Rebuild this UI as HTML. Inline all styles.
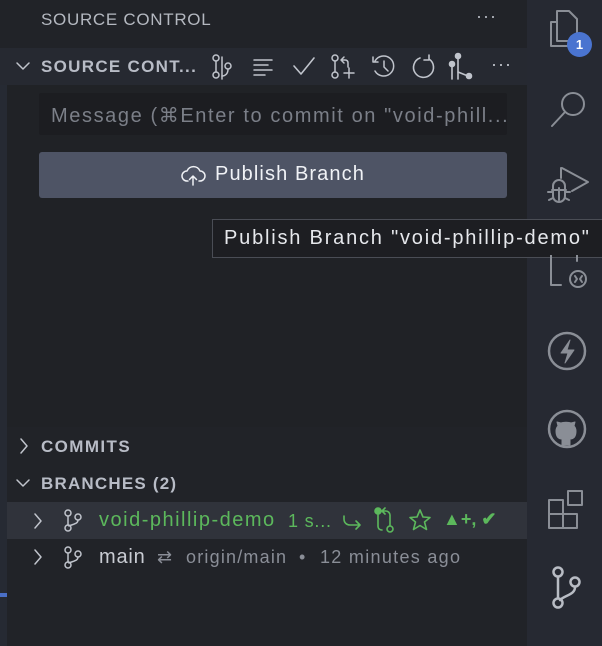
<!DOCTYPE html>
<html><head><style>
*{margin:0;padding:0;box-sizing:border-box}
body{width:602px;height:646px;background:#212328;font-family:"Liberation Sans",sans-serif;position:relative;overflow:hidden;color:#c9ccd3}
.abs{position:absolute;white-space:nowrap}
svg{position:absolute;fill:none;stroke-linecap:round;stroke-linejoin:round}
</style></head><body>
<div class="abs" style="left:0;top:0;width:527px;height:48px;background:#212328"></div>
<div class="abs" style="left:41px;top:10px;font-size:17px;color:#b4b8c0;letter-spacing:0.7px">SOURCE CONTROL</div>
<div class="abs" style="left:476px;top:6px;font-size:18px;color:#b4b8c0;letter-spacing:1px">···</div>
<div class="abs" style="left:0;top:48px;width:527px;height:37px;background:#262931"></div>
<div class="abs" style="left:0;top:85px;width:7px;height:561px;background:#262a33"></div>
<div class="abs" style="left:0;top:593px;width:7px;height:4px;background:#4a6fc6"></div>
<div class="abs" style="left:7px;top:85px;width:520px;height:342px;background:#202226"></div>
<div class="abs" style="left:527px;top:0;width:75px;height:646px;background:#262932"></div>
<!-- header -->
<svg style="left:15px;top:60px" width="16" height="12" stroke="#c0c4cc" stroke-width="1.5"><path d="M2 3l6 6 6-6"/></svg>
<div class="abs" style="left:41px;top:57px;font-size:17px;font-weight:bold;color:#b8bcc6;letter-spacing:1.3px">SOURCE CONT...</div>
<svg style="left:210px;top:53px" width="26" height="28" stroke="#c0c4cc" stroke-width="1.5">
<circle cx="6" cy="5" r="3"/><circle cx="6" cy="22" r="3"/><path d="M6 8v11M12 4v22"/><circle cx="18" cy="13" r="3"/><path d="M18 16c0 5-3 7-6 7"/></svg>
<svg style="left:252px;top:56px" width="22" height="20" stroke="#c0c4cc" stroke-width="1.5"><path d="M2 4h18M2 9h14M2 14h18M2 19h11"/></svg>
<svg style="left:291px;top:55px" width="26" height="22" stroke="#c0c4cc" stroke-width="1.6"><path d="M3 11l7 8 13-16"/></svg>
<svg style="left:330px;top:53px" width="28" height="28" stroke="#c0c4cc" stroke-width="1.5"><circle cx="5" cy="5" r="3"/><circle cx="5" cy="22" r="3"/><path d="M5 8v11M14 4l-3 3 3 3M11 7h4c2 0 3 1 3 3v4M19 15v10M14 20h10"/></svg>
<svg style="left:370px;top:53px" width="28" height="28" stroke="#c0c4cc" stroke-width="1.5"><path d="M5 8a10 10 0 1 1 0 10M3 4v5h5M14 8v6l4 4"/></svg>
<svg style="left:410px;top:53px" width="28" height="28" stroke="#c0c4cc" stroke-width="1.6"><path d="M19 6a10 10 0 1 1-9-1M19 2v5h-5"/></svg>
<svg style="left:448px;top:52px" width="28" height="30" stroke="#c0c4cc" stroke-width="1.6"><circle cx="10" cy="4" r="2.5" fill="#c0c4cc"/><path d="M10 7v20M4 14v13"/><circle cx="4" cy="12" r="2.5" fill="#c0c4cc"/><path d="M10 20l10 4"/><circle cx="21" cy="24" r="2.5" fill="#c0c4cc"/></svg>
<div class="abs" style="left:491px;top:54px;font-size:18px;color:#c0c4cc;letter-spacing:1px">···</div>
<!-- input -->
<div class="abs" style="left:39px;top:93px;width:468px;height:42px;background:#1c1d21;border-radius:2px"></div>
<div class="abs" style="left:51px;top:103px;font-size:20px;color:#7b7f88;letter-spacing:1.6px">Message (⌘Enter to commit on "void-phill...</div>
<div class="abs" style="left:39px;top:152px;width:468px;height:46px;background:#4e5465;border-radius:3px"></div>
<svg style="left:181px;top:164px" width="26" height="22" stroke="#eef0f4" stroke-width="1.5"><path d="M7 17H6a5 5 0 0 1 0-10 7 7 0 0 1 13 0 5 5 0 0 1 0 10h-1M12 21v-9M8.5 15.5L12 12l3.5 3.5"/></svg>
<div class="abs" style="left:215px;top:163px;font-size:20px;color:#f0f2f6;letter-spacing:1.1px">Publish Branch</div>
<!-- tooltip -->
<div class="abs" style="left:212px;top:219px;width:392px;height:39px;background:#1d1e22;border:1px solid #4a4d55"></div>
<div class="abs" style="left:224px;top:227px;font-size:20px;color:#e6e8ec;letter-spacing:1.8px">Publish Branch "void-phillip-demo"</div>
<!-- commits / branches -->
<svg style="left:18px;top:437px" width="12" height="18" stroke="#c0c4cc" stroke-width="1.5"><path d="M3 2l6 7-6 7"/></svg>
<div class="abs" style="left:41px;top:437px;font-size:17px;font-weight:bold;color:#b8bcc6;letter-spacing:1.4px">COMMITS</div>
<svg style="left:15px;top:477px" width="16" height="12" stroke="#c0c4cc" stroke-width="1.5"><path d="M2 3l6 6 6-6"/></svg>
<div class="abs" style="left:41px;top:474px;font-size:17px;font-weight:bold;color:#b8bcc6;letter-spacing:1.2px">BRANCHES (2)</div>
<div class="abs" style="left:7px;top:502px;width:520px;height:37px;background:#30333b"></div>
<svg style="left:32px;top:512px" width="12" height="18" stroke="#c0c4cc" stroke-width="1.5"><path d="M3 2l6 7-6 7"/></svg>
<svg style="left:63px;top:508px" width="22" height="26" stroke="#c0c4cc" stroke-width="1.5"><circle cx="5" cy="5" r="3"/><circle cx="5" cy="20" r="3"/><circle cx="15" cy="9" r="3"/><path d="M5 8v9M15 12c0 4-5 4-9 6"/></svg>
<div class="abs" style="left:99px;top:509px;font-size:20px;color:#5cb85c;letter-spacing:1.5px">void-phillip-demo</div>
<div class="abs" style="left:288px;top:511px;font-size:18px;color:#5cb85c;letter-spacing:0.8px">1 s...</div>
<svg style="left:340px;top:510px" width="24" height="22" stroke="#5cb85c" stroke-width="1.6"><path d="M4 6v3c0 4 3 6 6 6h10M16 11l4 4-4 4"/></svg>
<svg style="left:372px;top:505px" width="28" height="30" stroke="#5cb85c" stroke-width="1.6"><circle cx="6" cy="6" r="3" fill="#5cb85c"/><path d="M6 9v12c0 3 2 4 4 4M13 3l-3 3 3 3M10 6h4c2 0 4 2 4 4v11"/><circle cx="18" cy="24" r="3"/></svg>
<svg style="left:407px;top:508px" width="26" height="26" stroke="#5cb85c" stroke-width="1.6"><path d="M13 2l3 7 7 .5-5.5 4.5 2 7.5-6.5-4-6.5 4 2-7.5L3 9.5 10 9z"/></svg>
<div class="abs" style="left:443px;top:509px;font-size:18px;font-weight:bold;color:#5cb85c">▲+, ✔</div>
<svg style="left:32px;top:548px" width="12" height="18" stroke="#c0c4cc" stroke-width="1.5"><path d="M3 2l6 7-6 7"/></svg>
<svg style="left:63px;top:545px" width="22" height="26" stroke="#c0c4cc" stroke-width="1.5"><circle cx="5" cy="5" r="3"/><circle cx="5" cy="20" r="3"/><circle cx="15" cy="9" r="3"/><path d="M5 8v9M15 12c0 4-5 4-9 6"/></svg>
<div class="abs" style="left:99px;top:546px;font-size:20px;color:#c9ccd3;letter-spacing:0.8px">main</div>
<div class="abs" style="left:157px;top:547px;font-size:18px;color:#8a8e97">⇄</div>
<div class="abs" style="left:186px;top:547px;font-size:18px;color:#8a8e97;letter-spacing:1.2px">origin/main</div>
<div class="abs" style="left:299px;top:547px;font-size:18px;color:#8a8e97">•</div>
<div class="abs" style="left:320px;top:547px;font-size:18px;color:#8a8e97;letter-spacing:1.3px">12 minutes ago</div>
<!-- activity bar -->
<svg style="left:548px;top:8px" width="44" height="50" stroke="#8a8e96" stroke-width="2"><path d="M8 14H3v24h18v-5M9 3v30h20V11l-8-8z"/></svg>
<div class="abs" style="left:567px;top:32px;width:25px;height:25px;border-radius:50%;background:#4a74d0;color:#fff;font-size:13px;font-weight:bold;text-align:center;line-height:25px">1</div>
<svg style="left:548px;top:88px" width="44" height="44" stroke="#8a8e96" stroke-width="2"><circle cx="25" cy="16" r="11"/><path d="M17 24L4 38"/></svg>
<svg style="left:545px;top:160px" width="48" height="50" stroke="#8a8e96" stroke-width="2"><path d="M17 8l26 14-16 9M16 8v10"/><path d="M7 30h14M8 26a6 6 0 0 1 12 0v10a6 6 0 0 1-12 0zM3 32h4M21 32h4M4 40l4-2M24 40l-4-2M14 28v12"/></svg>
<svg style="left:545px;top:255px" width="48" height="40" stroke="#8a8e96" stroke-width="2"><path d="M6 0v30h10M32 0v6"/><circle cx="33" cy="24" r="8"/><path d="M30 21l2 3-2 3M37 21l-2 3 2 3"/></svg>
<svg style="left:546px;top:330px" width="44" height="44" stroke="#8a8e96" stroke-width="2.5"><circle cx="21" cy="21" r="18"/><path d="M24 10l-9 13h7l-3 10 9-13h-7z" fill="#8a8e96" stroke-width="1"/></svg>
<svg style="left:546px;top:408px" width="44" height="44" stroke="#8a8e96" stroke-width="2.5"><circle cx="21" cy="21" r="18"/><path d="M16 37v-6c-4 0-6-3-6-8 0-3 1-4 2-5l-1-4 4 1c2-1 8-1 10 0l4-1-1 4c1 1 2 2 2 5 0 5-2 8-6 8v6z" fill="#8a8e96" stroke-width="1"/></svg>
<svg style="left:546px;top:488px" width="44" height="44" stroke="#8a8e96" stroke-width="2"><path d="M3 12h14v28H3zM3 26h28v14H17M22 3h14v14H22z"/></svg>
<svg style="left:548px;top:565px" width="40" height="50" stroke="#b8bcc4" stroke-width="2.5"><circle cx="10" cy="7" r="4.5"/><circle cx="10" cy="38" r="4.5"/><circle cx="27" cy="17" r="4.5"/><path d="M10 12v21M27 22c0 8-10 8-15 13"/></svg>
</body></html>
